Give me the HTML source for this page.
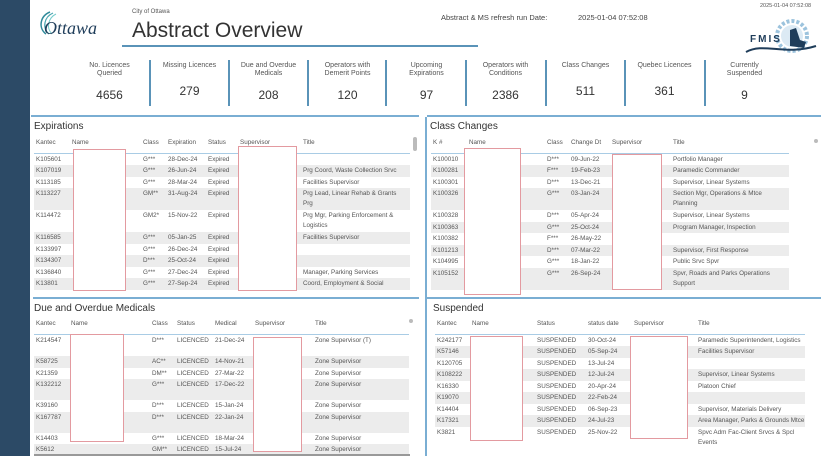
<!DOCTYPE html>
<html><head><meta charset="utf-8"><style>
*{margin:0;padding:0;box-sizing:border-box}
body{width:824px;height:456px;overflow:hidden;background:#fff;font-family:"Liberation Sans",sans-serif;color:#333;position:relative}
.a{position:absolute}
.side{left:0;top:0;width:30px;height:456px;background:#2c4a66}
.kl{font-size:7px;color:#555;text-align:center;line-height:8px;width:79px}
.kv{font-size:12px;color:#333;text-align:center;width:79px}
.sep{width:2px;height:46px;background:#5a93b8;top:60px}
.ptitle{font-size:10px;color:#333}
table{border-collapse:collapse;table-layout:fixed;font-size:6.3px;color:#555}
td{padding:0 2px;line-height:11.5px;vertical-align:top;white-space:nowrap;overflow:hidden}
th{font-weight:normal;text-align:left;padding:0 2px;line-height:10px;color:#555;border-bottom:1.5px solid #a9cce5;height:15px;vertical-align:top}
tr.g td{background:#ececec}
.red{border:1px solid #e39aa0;background:#fff}
.hb{height:2px;background:#7aaed3}
.vb{width:2px;background:#7aaed3}
</style></head><body>
<div class="a side"></div>
<svg class="a" style="left:36px;top:8px" width="64" height="30" viewBox="0 0 64 30">
<path d="M10 26 C2 20 4 8 14 4" stroke="#2f8a9a" stroke-width="1.5" fill="none"/>
<path d="M13 26 C6 20 8 9 17 5" stroke="#4aa6b0" stroke-width="1.2" fill="none"/>
<path d="M16 26 C10 20 12 10 20 6" stroke="#7cc" stroke-width="1" fill="none"/>
<text x="8" y="26" font-family="Liberation Serif" font-style="italic" font-size="18" fill="#1f3d5a">Ottawa</text>
</svg>
<div class="a" style="left:132px;top:9px;font-size:6px;color:#555">City of Ottawa</div>
<div class="a" style="left:132px;top:19px;font-size:21px;color:#333">Abstract Overview</div>
<div class="a" style="left:122px;top:45px;width:356px;height:2px;background:#5a93b8"></div>
<div class="a" style="left:441px;top:13px;font-size:7.5px;color:#444">Abstract &amp; MS refresh run Date:</div>
<div class="a" style="left:578px;top:13px;font-size:7.5px;color:#444">2025-01-04 07:52:08</div>
<div class="a" style="left:760px;top:3px;font-size:5.5px;color:#555">2025-01-04 07:52:08</div>
<svg class="a" style="left:744px;top:18px" width="75" height="40" viewBox="0 0 75 40">
<circle cx="48" cy="18" r="15" fill="none" stroke="#9cc3dd" stroke-width="4" stroke-dasharray="3 2"/>
<circle cx="48" cy="18" r="11" fill="#dceaf4"/>
<path d="M46 12 L52 10 L56 22 L62 24 L60 30 L46 28Z" fill="#1f3d5a"/>
<text x="6" y="24" font-size="10" font-weight="bold" fill="#1f3d5a" letter-spacing="2">FMIS</text>
<path d="M2 34 C20 24 40 38 72 28" stroke="#1f3d5a" stroke-width="2" fill="none"/>
</svg>
<div class="a kl" style="left:70px;top:62px">No. Licences<br>Queried</div><div class="a kv" style="left:70px;top:88px">4656</div>
<div class="a sep" style="left:149px"></div>
<div class="a kl" style="left:150px;top:62px">Missing Licences</div><div class="a kv" style="left:150px;top:84px">279</div>
<div class="a sep" style="left:228px"></div>
<div class="a kl" style="left:229px;top:62px">Due and Overdue<br>Medicals</div><div class="a kv" style="left:229px;top:88px">208</div>
<div class="a sep" style="left:307px"></div>
<div class="a kl" style="left:308px;top:62px">Operators with<br>Demerit Points</div><div class="a kv" style="left:308px;top:88px">120</div>
<div class="a sep" style="left:385px"></div>
<div class="a kl" style="left:387px;top:62px">Upcoming<br>Expirations</div><div class="a kv" style="left:387px;top:88px">97</div>
<div class="a sep" style="left:465px"></div>
<div class="a kl" style="left:466px;top:62px">Operators with<br>Conditions</div><div class="a kv" style="left:466px;top:88px">2386</div>
<div class="a sep" style="left:545px"></div>
<div class="a kl" style="left:546px;top:62px">Class Changes</div><div class="a kv" style="left:546px;top:84px">511</div>
<div class="a sep" style="left:624px"></div>
<div class="a kl" style="left:625px;top:62px">Quebec Licences</div><div class="a kv" style="left:625px;top:84px">361</div>
<div class="a sep" style="left:704px"></div>
<div class="a kl" style="left:705px;top:62px">Currently<br>Suspended</div><div class="a kv" style="left:705px;top:88px">9</div>

<div class="a hb" style="left:31px;top:115px;width:388px"></div>
<div class="a hb" style="left:427px;top:115px;width:394px"></div>
<div class="a vb" style="left:425px;top:117px;height:339px"></div>
<div class="a hb" style="left:33px;top:297px;width:386px"></div>
<div class="a hb" style="left:427px;top:297px;width:394px"></div>

<div class="a ptitle" style="left:34px;top:121px">Expirations</div>
<div class="a" style="left:413px;top:137px;width:4px;height:14px;background:#bbb;border-radius:2px"></div>
<table class="a" style="left:34px;top:138px;width:376px">
<colgroup><col style="width:36px"><col style="width:71px"><col style="width:25px"><col style="width:40px"><col style="width:32px"><col style="width:63px"><col style="width:109px"></colgroup>
<tr><th>Kantec</th><th>Name</th><th>Class</th><th>Expiration</th><th>Status</th><th>Supervisor</th><th>Title</th></tr>
<tr><td>K105601</td><td></td><td>G***</td><td>28-Dec-24</td><td>Expired</td><td></td><td></td></tr>
<tr class="g"><td>K107019</td><td></td><td>G***</td><td>26-Jun-24</td><td>Expired</td><td></td><td>Prg Coord, Waste Collection Srvc</td></tr>
<tr><td>K113185</td><td></td><td>G***</td><td>28-Mar-24</td><td>Expired</td><td></td><td>Facilities Supervisor</td></tr>
<tr class="g"><td>K113227</td><td></td><td>GM**</td><td>31-Aug-24</td><td>Expired</td><td></td><td style="line-height:10px;padding-top:1px;padding-bottom:1px">Prg Lead, Linear Rehab &amp; Grants<br>Prg</td></tr>
<tr><td>K114472</td><td></td><td>GM2*</td><td>15-Nov-22</td><td>Expired</td><td></td><td style="line-height:10px;padding-top:1px;padding-bottom:1px">Prg Mgr, Parking Enforcement &amp;<br>Logistics</td></tr>
<tr class="g"><td>K116585</td><td></td><td>G***</td><td>05-Jan-25</td><td>Expired</td><td></td><td>Facilities Supervisor</td></tr>
<tr><td>K133997</td><td></td><td>G***</td><td>26-Dec-24</td><td>Expired</td><td></td><td></td></tr>
<tr class="g"><td>K134307</td><td></td><td>D***</td><td>25-Oct-24</td><td>Expired</td><td></td><td></td></tr>
<tr><td>K136840</td><td></td><td>G***</td><td>27-Dec-24</td><td>Expired</td><td></td><td>Manager, Parking Services</td></tr>
<tr class="g"><td>K13801</td><td></td><td>G***</td><td>27-Sep-24</td><td>Expired</td><td></td><td>Coord, Employment &amp; Social</td></tr>
</table>
<div class="a red" style="left:73px;top:149px;width:53px;height:142px"></div>
<div class="a red" style="left:238px;top:146px;width:59px;height:145px"></div>

<div class="a ptitle" style="left:430px;top:121px">Class Changes</div>
<div class="a" style="left:814px;top:139px;width:4px;height:4px;border-radius:2px;background:#bbb"></div>
<table class="a" style="left:431px;top:138px;width:358px">
<colgroup><col style="width:36px"><col style="width:78px"><col style="width:24px"><col style="width:41px"><col style="width:61px"><col style="width:118px"></colgroup>
<tr><th>K #</th><th>Name</th><th>Class</th><th>Change Dt</th><th>Supervisor</th><th>Title</th></tr>
<tr><td>K100010</td><td></td><td>D***</td><td>09-Jun-22</td><td></td><td>Portfolio Manager</td></tr>
<tr class="g"><td>K100281</td><td></td><td>F***</td><td>19-Feb-23</td><td></td><td>Paramedic Commander</td></tr>
<tr><td>K100301</td><td></td><td>D***</td><td>13-Dec-21</td><td></td><td>Supervisor, Linear Systems</td></tr>
<tr class="g"><td>K100326</td><td></td><td>G***</td><td>03-Jan-24</td><td></td><td style="line-height:10px;padding-top:1px;padding-bottom:1px">Section Mgr, Operations &amp; Mtce<br>Planning</td></tr>
<tr><td>K100328</td><td></td><td>D***</td><td>05-Apr-24</td><td></td><td>Supervisor, Linear Systems</td></tr>
<tr class="g"><td>K100363</td><td></td><td>G***</td><td>25-Oct-24</td><td></td><td>Program Manager, Inspection</td></tr>
<tr><td>K100382</td><td></td><td>F***</td><td>26-May-22</td><td></td><td></td></tr>
<tr class="g"><td>K101213</td><td></td><td>D***</td><td>07-Mar-22</td><td></td><td>Supervisor, First Response</td></tr>
<tr><td>K104995</td><td></td><td>G***</td><td>18-Jan-22</td><td></td><td>Public Srvc Spvr</td></tr>
<tr class="g"><td>K105152</td><td></td><td>G***</td><td>26-Sep-24</td><td></td><td style="line-height:10px;padding-top:1px;padding-bottom:1px">Spvr, Roads and Parks Operations<br>Support</td></tr>
</table>
<div class="a red" style="left:464px;top:148px;width:57px;height:147px"></div>
<div class="a red" style="left:612px;top:154px;width:50px;height:136px"></div>

<div class="a ptitle" style="left:34px;top:303px">Due and Overdue Medicals</div>
<div class="a" style="left:409px;top:319px;width:4px;height:4px;border-radius:2px;background:#bbb"></div>
<table class="a" style="left:34px;top:319px;width:375px">
<colgroup><col style="width:35px"><col style="width:81px"><col style="width:25px"><col style="width:38px"><col style="width:40px"><col style="width:60px"><col style="width:96px"></colgroup>
<tr><th>Kantec</th><th>Name</th><th>Class</th><th>Status</th><th>Medical</th><th>Supervisor</th><th>Title</th></tr>
<tr><td style="height:22px">K214547</td><td></td><td>D***</td><td>LICENCED</td><td>21-Dec-24</td><td></td><td>Zone Supervisor (T)</td></tr>
<tr class="g"><td>K58725</td><td></td><td>AC**</td><td>LICENCED</td><td>14-Nov-21</td><td></td><td>Zone Supervisor</td></tr>
<tr><td>K21359</td><td></td><td>DM**</td><td>LICENCED</td><td>27-Mar-22</td><td></td><td>Zone Supervisor</td></tr>
<tr class="g"><td style="height:21px">K132212</td><td></td><td>G***</td><td>LICENCED</td><td>17-Dec-22</td><td></td><td>Zone Supervisor</td></tr>
<tr><td>K39160</td><td></td><td>D***</td><td>LICENCED</td><td>15-Jan-24</td><td></td><td>Zone Supervisor</td></tr>
<tr class="g"><td style="height:21px">K167787</td><td></td><td>D***</td><td>LICENCED</td><td>22-Jan-24</td><td></td><td>Zone Supervisor</td></tr>
<tr><td>K14403</td><td></td><td>G***</td><td>LICENCED</td><td>18-Mar-24</td><td></td><td>Zone Supervisor</td></tr>
<tr class="g"><td>K5612</td><td></td><td>GM**</td><td>LICENCED</td><td>15-Jul-24</td><td></td><td>Zone Supervisor</td></tr>
</table>
<div class="a" style="left:34px;top:454px;width:376px;height:2px;background:#999"></div>
<div class="a red" style="left:70px;top:334px;width:54px;height:108px"></div>
<div class="a red" style="left:253px;top:337px;width:49px;height:115px"></div>

<div class="a ptitle" style="left:433px;top:303px">Suspended</div>
<table class="a" style="left:435px;top:319px;width:370px">
<colgroup><col style="width:35px"><col style="width:65px"><col style="width:51px"><col style="width:46px"><col style="width:64px"><col style="width:109px"></colgroup>
<tr><th>Kantec</th><th>Name</th><th>Status</th><th>status date</th><th>Supervisor</th><th>Title</th></tr>
<tr><td>K242177</td><td></td><td>SUSPENDED</td><td>30-Oct-24</td><td></td><td>Paramedic Superintendent, Logistics</td></tr>
<tr class="g"><td>K57146</td><td></td><td>SUSPENDED</td><td>05-Sep-24</td><td></td><td>Facilities Supervisor</td></tr>
<tr><td>K120705</td><td></td><td>SUSPENDED</td><td>13-Jul-24</td><td></td><td></td></tr>
<tr class="g"><td>K108222</td><td></td><td>SUSPENDED</td><td>12-Jul-24</td><td></td><td>Supervisor, Linear Systems</td></tr>
<tr><td>K16330</td><td></td><td>SUSPENDED</td><td>20-Apr-24</td><td></td><td>Platoon Chief</td></tr>
<tr class="g"><td>K19070</td><td></td><td>SUSPENDED</td><td>22-Feb-24</td><td></td><td></td></tr>
<tr><td>K14404</td><td></td><td>SUSPENDED</td><td>06-Sep-23</td><td></td><td>Supervisor, Materials Delivery</td></tr>
<tr class="g"><td>K17321</td><td></td><td>SUSPENDED</td><td>24-Jul-23</td><td></td><td>Area Manager, Parks &amp; Grounds Mtce</td></tr>
<tr><td>K3821</td><td></td><td>SUSPENDED</td><td>25-Nov-22</td><td></td><td style="line-height:10px;padding-top:1px">Spvc Adm Fac-Client Srvcs &amp; Spcl<br>Events</td></tr>
</table>
<div class="a red" style="left:470px;top:336px;width:53px;height:105px"></div>
<div class="a red" style="left:630px;top:336px;width:58px;height:103px"></div>
</body></html>
